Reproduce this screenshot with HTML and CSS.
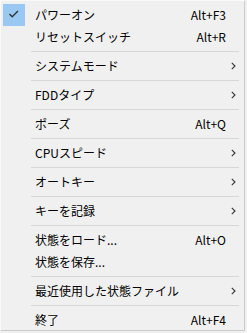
FILE: index.html
```html
<!DOCTYPE html>
<html lang="ja">
<head>
    <meta charset="UTF-8">
    <title>メニュー</title>
    <link rel="stylesheet" href="styles.css">
</head>
<body>
    <div class="menu">
        <div class="item">
            <span class="check checked">
                <svg width="22" height="22" viewBox="0 0 22 22"><path d="M6.5 10 L9.2 12.8 L15 7" fill="none" stroke="#333" stroke-width="1.4"/></svg>
            </span>
            <span class="label">パワーオン</span>
            <span class="key">Alt+F3</span>
            <span class="sub"></span>
        </div>
        <div class="item">
            <span class="check"></span>
            <span class="label">リセットスイッチ</span>
            <span class="key">Alt+R</span>
            <span class="sub"></span>
        </div>
        <div class="sep"></div>
        <div class="item">
            <span class="check"></span>
            <span class="label">システムモード</span>
            <span class="key"></span>
            <span class="sub"><svg width="5" height="8" viewBox="0 0 5 8"><path d="M0.8 0.8 L4 4 L0.8 7.2" fill="none" stroke="#333" stroke-width="1.1"/></svg></span>
        </div>
        <div class="sep"></div>
        <div class="item">
            <span class="check"></span>
            <span class="label">FDDタイプ</span>
            <span class="key"></span>
            <span class="sub"><svg width="5" height="8" viewBox="0 0 5 8"><path d="M0.8 0.8 L4 4 L0.8 7.2" fill="none" stroke="#333" stroke-width="1.1"/></svg></span>
        </div>
        <div class="sep"></div>
        <div class="item">
            <span class="check"></span>
            <span class="label">ポーズ</span>
            <span class="key">Alt+Q</span>
            <span class="sub"></span>
        </div>
        <div class="sep"></div>
        <div class="item">
            <span class="check"></span>
            <span class="label">CPUスピード</span>
            <span class="key"></span>
            <span class="sub"><svg width="5" height="8" viewBox="0 0 5 8"><path d="M0.8 0.8 L4 4 L0.8 7.2" fill="none" stroke="#333" stroke-width="1.1"/></svg></span>
        </div>
        <div class="sep"></div>
        <div class="item">
            <span class="check"></span>
            <span class="label">オートキー</span>
            <span class="key"></span>
            <span class="sub"><svg width="5" height="8" viewBox="0 0 5 8"><path d="M0.8 0.8 L4 4 L0.8 7.2" fill="none" stroke="#333" stroke-width="1.1"/></svg></span>
        </div>
        <div class="sep"></div>
        <div class="item">
            <span class="check"></span>
            <span class="label">キーを記録</span>
            <span class="key"></span>
            <span class="sub"><svg width="5" height="8" viewBox="0 0 5 8"><path d="M0.8 0.8 L4 4 L0.8 7.2" fill="none" stroke="#333" stroke-width="1.1"/></svg></span>
        </div>
        <div class="sep"></div>
        <div class="item">
            <span class="check"></span>
            <span class="label">状態をロード...</span>
            <span class="key">Alt+O</span>
            <span class="sub"></span>
        </div>
        <div class="item">
            <span class="check"></span>
            <span class="label">状態を保存...</span>
            <span class="key"></span>
            <span class="sub"></span>
        </div>
        <div class="sep"></div>
        <div class="item">
            <span class="check"></span>
            <span class="label">最近使用した状態ファイル</span>
            <span class="key"></span>
            <span class="sub"><svg width="5" height="8" viewBox="0 0 5 8"><path d="M0.8 0.8 L4 4 L0.8 7.2" fill="none" stroke="#333" stroke-width="1.1"/></svg></span>
        </div>
        <div class="sep"></div>
        <div class="item">
            <span class="check"></span>
            <span class="label">終了</span>
            <span class="key">Alt+F4</span>
            <span class="sub"></span>
        </div>
    </div>
</body>
</html>
```

FILE: styles.css
```css
body {
    margin: 0;
    background-color: #f0f0f0;
    font-family: "Noto Sans CJK JP", sans-serif;
    font-size: 12px;
    color: #000;
}
.menu {
    box-sizing: border-box;
    width: 245px;
    height: 331px;
    padding-top: 3px;
    background-color: #f0f0f0;
    border: 1px solid #fafafa;
    border-right-color: #cccccc;
    border-bottom-color: #cccccc;
}
.item {
    display: flex;
    align-items: center;
    height: 22px;
    line-height: 22px;
}
.check {
    width: 22px;
    height: 22px;
    margin: 0 10px 0 2px;
}
.check svg {
    display: block;
}
.checked {
    background-color: #99c9f3;
}
.label {
    flex: 1;
    white-space: nowrap;
}
.key {
    text-align: right;
}
.sub {
    box-sizing: border-box;
    width: 18px;
    padding-left: 5px;
    display: flex;
    align-items: center;
    height: 22px;
}
.sub svg {
    display: block;
}
.sep {
    height: 1px;
    margin: 3px 5px 3px 30px;
    background-color: #d7d7d7;
}
```
